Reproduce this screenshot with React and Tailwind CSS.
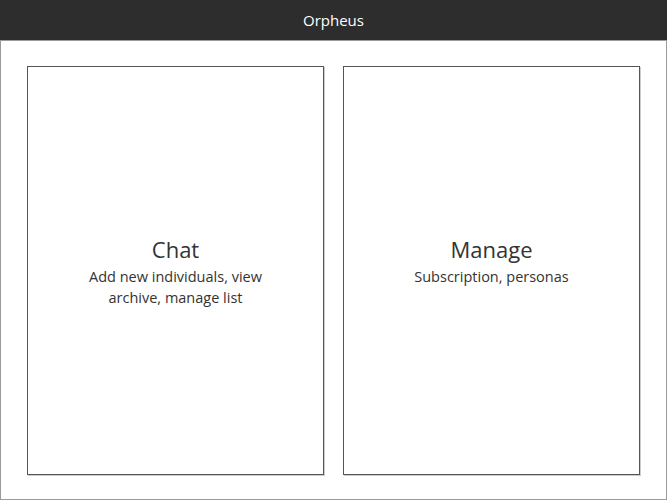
export default function App() {
  const cards = [
    { title: 'Chat', sub: 'Add new individuals, view archive, manage list' },
    { title: 'Manage', sub: 'Subscription, personas' },
  ]
  return (
    <div className="w-[667px] h-[500px] bg-white flex flex-col text-[#333]" style={{ fontFamily: '"Open Sans", sans-serif' }}>
      <div className="h-10 bg-[#2d2d2d] text-white text-[15px] flex items-center justify-center">Orpheus</div>
      <div className="flex-1 border border-[#9a9a9a] px-[26px] pt-[25px] pb-[24px] grid grid-cols-2 gap-[19px]">
        {cards.map(c => (
          <div key={c.title} className="border border-[#555] shadow-[1px_1px_0_#ccc] flex flex-col items-center pt-[167px] px-12 text-center">
            <h2 className="text-[22px] leading-[30px]">{c.title}</h2>
            <p className="text-[14.5px] leading-[21px] mt-[2px]">{c.sub}</p>
          </div>
        ))}
      </div>
    </div>
  )
}
